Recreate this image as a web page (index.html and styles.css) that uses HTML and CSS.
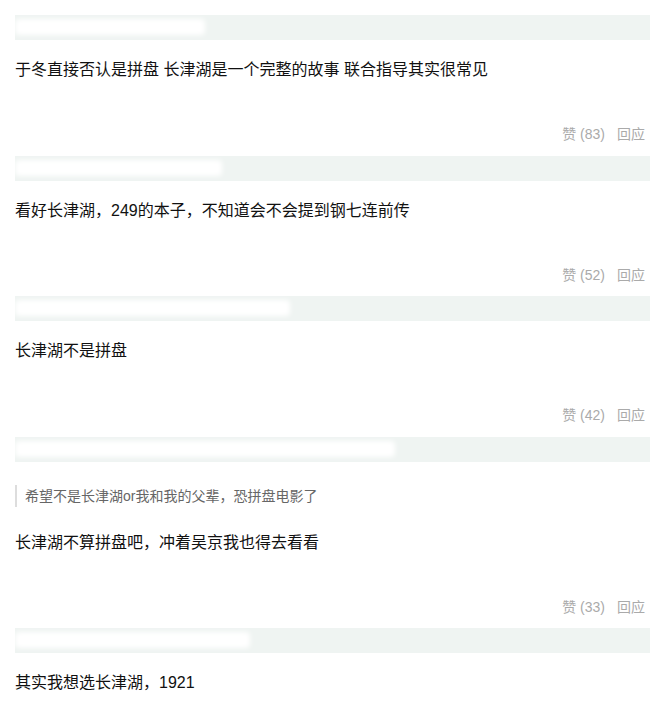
FILE: index.html
```html
<!DOCTYPE html>
<html lang="zh-CN">
<head>
    <meta charset="UTF-8">
    <meta name="viewport" content="width=device-width, initial-scale=1.0">
    <title>评论</title>
    <link rel="stylesheet" href="styles.css">
</head>
<body>

<div class="comment-list">

    <div class="comment">
        <div class="comment-header"><span class="author" style="width: 190px"></span></div>
        <p class="comment-text">于冬直接否认是拼盘 长津湖是一个完整的故事 联合指导其实很常见</p>
        <div class="comment-actions"><a href="#">赞 (83)</a><a href="#">回应</a></div>
    </div>

    <div class="comment">
        <div class="comment-header"><span class="author" style="width: 207px"></span></div>
        <p class="comment-text">看好长津湖，249的本子，不知道会不会提到钢七连前传</p>
        <div class="comment-actions"><a href="#">赞 (52)</a><a href="#">回应</a></div>
    </div>

    <div class="comment">
        <div class="comment-header"><span class="author" style="width: 275px"></span></div>
        <p class="comment-text">长津湖不是拼盘</p>
        <div class="comment-actions"><a href="#">赞 (42)</a><a href="#">回应</a></div>
    </div>

    <div class="comment">
        <div class="comment-header"><span class="author" style="width: 380px"></span></div>
        <blockquote class="reply-quote">希望不是长津湖or我和我的父辈，恐拼盘电影了</blockquote>
        <p class="comment-text after-quote">长津湖不算拼盘吧，冲着吴京我也得去看看</p>
        <div class="comment-actions"><a href="#">赞 (33)</a><a href="#">回应</a></div>
    </div>

    <div class="comment">
        <div class="comment-header"><span class="author" style="width: 235px"></span></div>
        <p class="comment-text">其实我想选长津湖，1921</p>
    </div>

</div>

</body>
</html>
```

FILE: styles.css
```css
body {
    font-family: "Liberation Sans", "Noto Sans CJK SC", sans-serif;
    background-color: #fff;
    color: #111;
    margin: 0;
    padding: 0;
}

.comment-list {
    padding: 15px 7px 0 15px;
}

.comment-header {
    height: 25px;
    background-color: #eff4f2;
    overflow: hidden;
}

/* author name is blurred out in the screenshot */
.author {
    display: block;
    height: 16px;
    margin-top: 4px;
    background-color: #fff;
    border-radius: 4px;
    filter: blur(2.5px);
}

.comment-text {
    font-size: 16px;
    line-height: 24px;
    margin: 18px 0 0 0;
}

.comment-text.after-quote {
    margin-top: 24px;
}

.reply-quote {
    margin: 23px 0 0 0;
    padding-left: 8px;
    border-left: 2px solid #ddd;
    color: #666;
    font-size: 14px;
    line-height: 22px;
}

.comment-actions {
    display: flex;
    justify-content: flex-end;
    gap: 12px;
    margin-top: 42px;
    margin-bottom: 11.5px;
    padding-right: 5px;
    font-size: 14px;
    line-height: 20px;
}

.comment-actions a {
    color: #aaa;
    text-decoration: none;
}
```
